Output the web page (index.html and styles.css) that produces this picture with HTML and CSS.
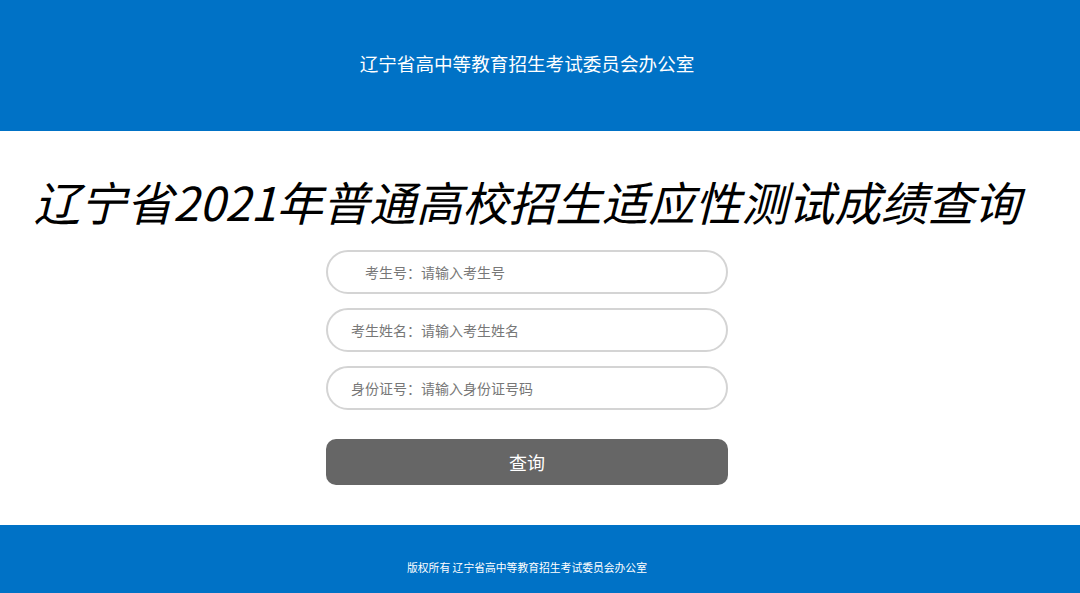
FILE: index.html
```html
<!DOCTYPE html>
<html lang="zh-CN">
<head>
  <meta charset="UTF-8">
  <meta name="viewport" content="width=device-width, initial-scale=1">
  <title>辽宁省2021年普通高校招生适应性测试成绩查询</title>
  <link rel="stylesheet" href="styles.css">
</head>
<body>
  <div class="header">辽宁省高中等教育招生考试委员会办公室</div>

  <div class="main">
    <h1 class="title">辽宁省2021年普通高校招生适应性测试成绩查询</h1>
    <form class="query-form" id="queryForm">
      <div class="field">
        <label for="ksh">考生号：</label>
        <input type="text" id="ksh" placeholder="请输入考生号">
      </div>
      <div class="field">
        <label for="xm">考生姓名：</label>
        <input type="text" id="xm" placeholder="请输入考生姓名">
      </div>
      <div class="field">
        <label for="sfz">身份证号：</label>
        <input type="text" id="sfz" placeholder="请输入身份证号码">
      </div>
      <button type="submit" class="btn">查询</button>
    </form>
  </div>

  <div class="footer">版权所有 辽宁省高中等教育招生考试委员会办公室</div>
</body>
</html>
```

FILE: styles.css
```css
body {
  margin: 0;
  font-family: "Noto Sans CJK SC", "Noto Sans", sans-serif;
  background: #fff;
}
.header {
  height: 131px;
  background: #0072c6;
  color: #fff;
  font-size: 18.6px;
  display: flex;
  align-items: center;
  justify-content: center;
  padding: 0 26px 6px 0;
  box-sizing: border-box;
}
.main {
  height: 394px;
  padding-right: 26px;
  display: flex;
  flex-direction: column;
  align-items: center;
}
.title {
  margin: 39px 0 0;
  font-size: 46.5px;
  line-height: 62px;
  font-weight: normal;
  font-style: italic;
  color: #000;
  white-space: nowrap;
}
.query-form {
  width: 402px;
  margin-top: 18px;
  display: flex;
  flex-direction: column;
  gap: 14px;
}
.field {
  height: 40px;
  border: 2px solid #d4d4d4;
  border-radius: 22px;
  display: flex;
  align-items: center;
}
.field label {
  width: 93px;
  text-align: right;
  font-size: 14px;
  color: #777;
  flex-shrink: 0;
}
.field input {
  flex: 1;
  border: none;
  outline: none;
  background: transparent;
  font-family: inherit;
  font-size: 14px;
  color: #555;
  padding: 0;
  margin-right: 20px;
}
.field input::placeholder {
  color: #777;
}
.btn {
  margin-top: 15px;
  height: 46px;
  border: none;
  border-radius: 10px;
  background: #666;
  color: #fff;
  font-family: inherit;
  font-size: 18px;
  cursor: pointer;
}
.footer {
  height: 68px;
  background: #0072c6;
  color: #fff;
  font-size: 10.8px;
  display: flex;
  align-items: center;
  justify-content: center;
  padding: 16px 26px 0 0;
  box-sizing: border-box;
}
```
